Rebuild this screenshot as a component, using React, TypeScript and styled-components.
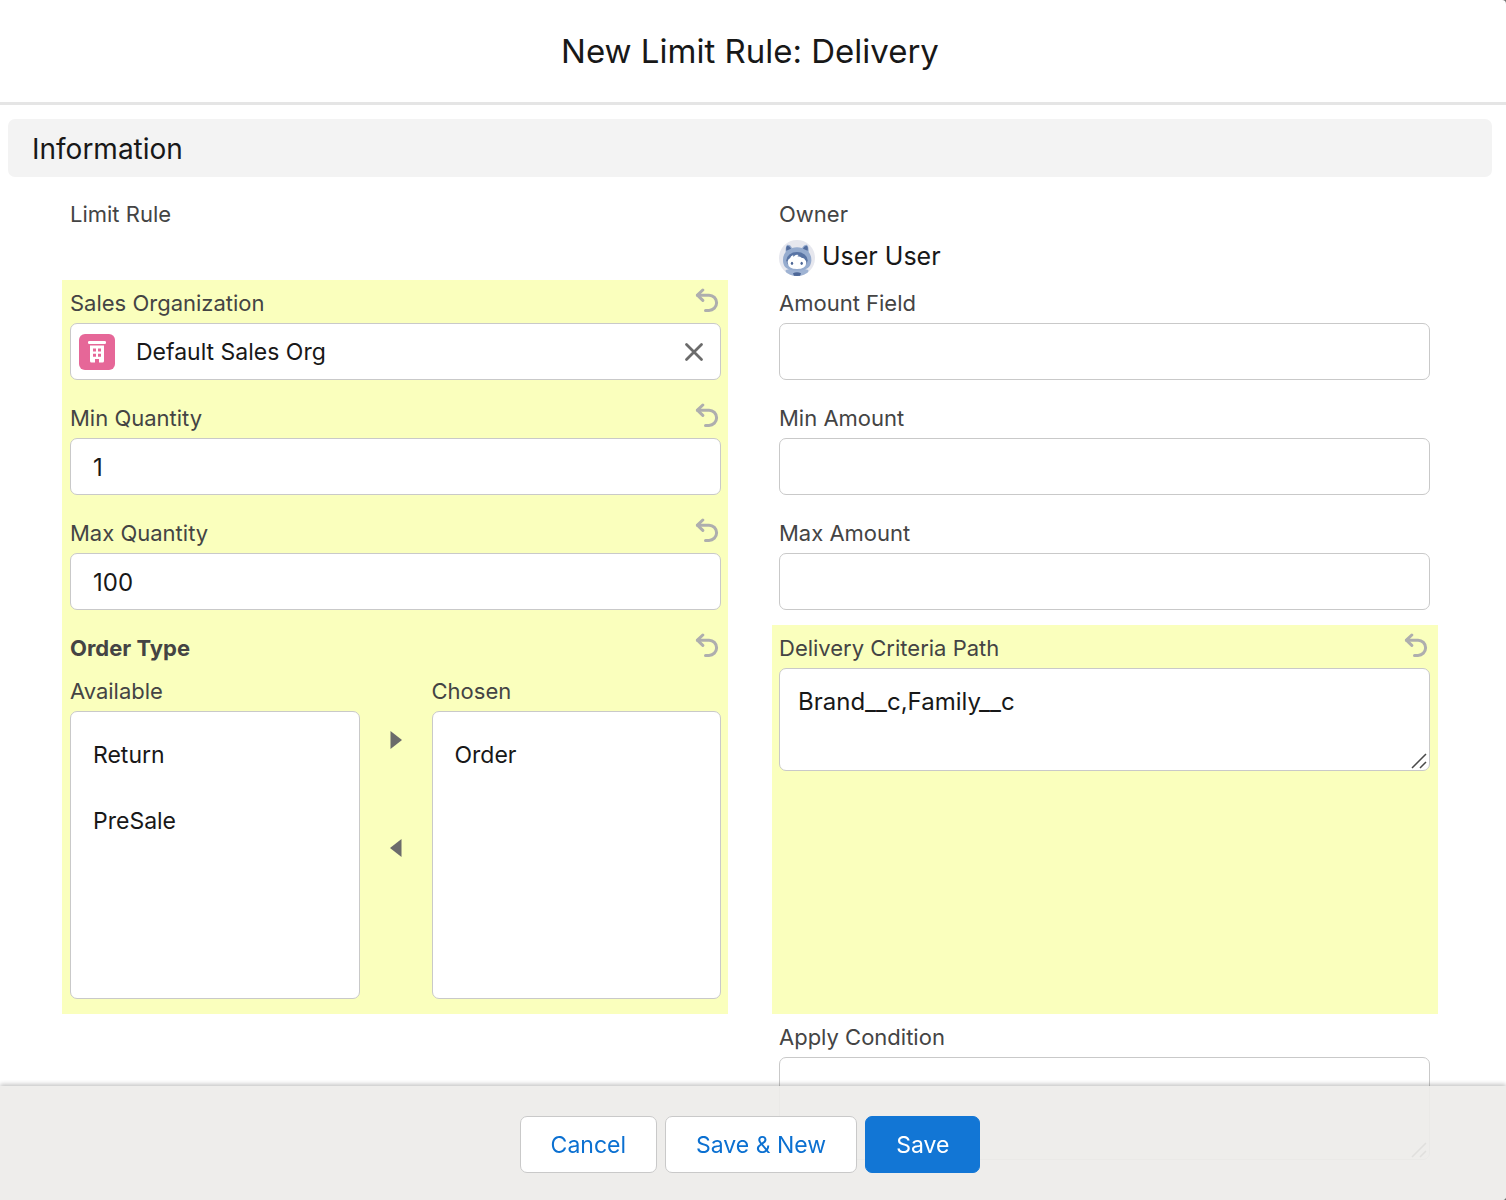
import React, { useState } from "react";
import styled, { createGlobalStyle, css } from "styled-components";

const colors = {
  text: "#181818",
  label: "#444444",
  line: "#c9c9c9",
  edited: "#faffbd",
  brand: "#1276d5",
  link: "#0b70d1",
  iconMuted: "#aeaeae",
  icon: "#6b6b6b",
};

const GlobalStyle = createGlobalStyle`
  *, *::before, *::after { box-sizing: border-box; }
  body {
    margin: 0;
    background: #6f6f6f;
    color: ${colors.text};
    font-family: Inter, "Liberation Sans", sans-serif;
  }
  button, input, select, textarea { font-family: inherit; }
`;

const Dialog = styled.div`
  min-height: 100vh;
  background: #ffffff;
  border-radius: 0 4px 4px 0;
`;

const Header = styled.header`
  display: flex;
  align-items: center;
  justify-content: center;
  height: 105px;
  padding-right: 6px;
  border-bottom: 3px solid #e5e5e5;
`;

const Title = styled.h1`
  margin: 0;
  font-size: 33px;
  font-weight: 400;
  line-height: 44px;
`;

const Main = styled.main`
  padding: 14px 14px 0 8px;
`;

const SectionTitle = styled.h2`
  margin: 0;
  padding: 2px 24px 0;
  border-radius: 7px;
  background: #f3f3f3;
  font-size: 28px;
  font-weight: 400;
  line-height: 56px;
`;

const Columns = styled.form`
  display: grid;
  grid-template-columns: 1fr 1fr;
  column-gap: 44px;
  padding: 14px 54px 0;
`;

const Cell = styled.div<{ $edited?: boolean; $size?: "first" | "normal" }>`
  min-width: 0;
  min-height: ${(p) => (p.$size === "first" ? 89 : 115)}px;
  padding: 8px 7px ${(p) => (p.$size === "first" ? 4 : 15)}px 8px;
  background: ${(p) => (p.$edited ? colors.edited : "transparent")};

  &:nth-child(even) {
    padding-right: 8px;
    padding-left: 7px;
  }
`;

const LabelRow = styled.div`
  display: flex;
  align-items: flex-start;
  justify-content: space-between;
  height: 30px;
  margin-bottom: 5px;
`;

const labelText = css`
  display: block;
  color: ${colors.label};
  font-size: 22px;
  line-height: 30px;
`;

const Label = styled.label`
  ${labelText}
`;

const LabelText = styled.span<{ $strong?: boolean }>`
  ${labelText}
  font-weight: ${(p) => (p.$strong ? 700 : 400)};
`;

const IconButton = styled.button`
  display: flex;
  flex: none;
  padding: 0;
  border: 0;
  background: none;
  cursor: pointer;
`;

const box = css`
  display: block;
  width: 100%;
  border: 1px solid ${colors.line};
  border-radius: 7px;
  background: #ffffff;
  color: ${colors.text};
  font-size: 24px;
`;

const TextInput = styled.input`
  ${box}
  height: 57px;
  padding: 2px 22px 0;
`;

const AreaWrap = styled.div`
  position: relative;
`;

const TextArea = styled.textarea`
  ${box}
  height: 103px;
  padding: 16px 18px;
  line-height: 34px;
  resize: none;
`;

const Grip = styled.svg`
  position: absolute;
  right: 3px;
  bottom: 2px;
`;

const Lookup = styled.div`
  ${box}
  display: flex;
  align-items: center;
  gap: 21px;
  height: 57px;
  padding: 0 16px 0 8px;
`;

const LookupInput = styled.input`
  flex: 1;
  min-width: 0;
  padding: 0;
  border: 0;
  background: transparent;
  color: ${colors.text};
  font-size: 23px;
`;

const Owner = styled.div`
  display: flex;
  align-items: flex-start;
  gap: 7px;
  margin-top: 11px;
  font-size: 25px;
  line-height: 33px;
`;

const Transfer = styled.div`
  display: grid;
  grid-template-columns: 1fr 72px 1fr;
  padding-top: 8px;
`;

const TransferList = styled.div`
  display: flex;
  flex-direction: column;
  gap: 5px;
`;

const ListBox = styled.select`
  ${box}
  appearance: none;
  height: 288px;
  padding: 10px 0;
  overflow: auto;
  outline: none;
  font-size: 23px;
`;

const Choice = styled.option`
  min-height: 66px;
  padding: 19px 22px;
`;

const Arrows = styled.div`
  display: flex;
  flex-direction: column;
  align-items: center;
  gap: 84px;
  padding-top: 52px;
`;

const Footer = styled.footer`
  position: fixed;
  right: 0;
  bottom: 0;
  left: 0;
  display: flex;
  justify-content: center;
  gap: 8px;
  padding: 30px 6px 27px 0;
  border-radius: 0 0 4px 0;
  background: rgba(237, 235, 233, 0.92);
  box-shadow: 0 -2px 4px rgba(0, 0, 0, 0.22);
`;

const Action = styled.button<{ $primary?: boolean }>`
  height: 57px;
  padding: 0 30px;
  border: 1px solid ${(p) => (p.$primary ? colors.brand : colors.line)};
  border-radius: 7px;
  background: ${(p) => (p.$primary ? colors.brand : "#ffffff")};
  color: ${(p) => (p.$primary ? "#ffffff" : colors.link)};
  font-size: 23px;
  cursor: pointer;
`;

const UndoIcon = () => (
  <svg width="26" height="24" viewBox="0 0 26 24" fill="none" stroke={colors.iconMuted} strokeWidth="3" strokeLinecap="round" strokeLinejoin="round" aria-hidden="true">
    <path d="M7.800 2 2.400 7.200 7.800 12.400" />
    <path d="M2.500 7.200H14a7.600 7.600 0 0 1 0 15.200H10.500" />
  </svg>
);

const ClearIcon = () => (
  <svg width="20" height="20" viewBox="0 0 20 20" fill="none" stroke={colors.icon} strokeWidth="2.8" strokeLinecap="round" aria-hidden="true">
    <path d="M2.500 2.500 17.500 17.500M17.500 2.500 2.500 17.500" />
  </svg>
);

const OrgIcon = () => (
  <svg width="36" height="36" viewBox="0 0 36 36" aria-hidden="true">
    <rect width="36" height="36" rx="6" fill="#e66798" />
    <rect x="9" y="7" width="18" height="3" rx="1.2" fill="#fff" />
    <path fillRule="evenodd" fill="#fff" d="M11 11.5h14V27a1.5 1.5 0 0 1-1.5 1.5H20V25h-4v3.500h-3.500A1.500 1.500 0 0 1 11 27zM14 14.500v3h3v-3zM19 14.500v3h3v-3zM14 19.800v3h3v-3zM19 19.800v3h3v-3z" />
  </svg>
);

const Avatar = () => (
  <svg width="36" height="36" viewBox="0 0 108 108" aria-hidden="true">
    <defs>
      <clipPath id="avatar-disc">
        <circle cx="54" cy="54" r="54" />
      </clipPath>
    </defs>
    <g clipPath="url(#avatar-disc)">
      <rect width="108" height="108" fill="#e6e7ee" />
      <path d="M20 108V90q34-12 68 0v18z" fill="#9fb3d3" />
      <path d="M20 36Q19 18 25 14q10-1 14 10 15-5 30 0Q75 13 84 14q6 6 5 22 9 11 8 27-2 29-43 29T12 63q-1-16 8-27z" fill="#95abce" />
      <path d="M22 32q-2-14 4-15 8 1 10 9zM86 32q2-14-4-15-8 1-10 9z" fill="#526c9d" />
      <ellipse cx="54" cy="61" rx="32" ry="25" fill="#5974a4" />
      <path d="M26 64q2-7 7-9 2-8 10-10-2 4 1 5 4-7 15-5l-4 4q10 0 14 5 7-1 9 5 4 3 4 10-2 18-28 18T26 68z" fill="#fff" />
      <ellipse cx="39" cy="70" rx="3.500" ry="5" fill="#4d6797" />
      <ellipse cx="68" cy="70" rx="3.500" ry="5" fill="#4d6797" />
      <path d="M42 100q12-6 24 0l-3 8H45z" fill="#4d6797" />
    </g>
  </svg>
);

const Arrow = ({ left }: { left?: boolean }) => (
  <svg width="14" height="24" viewBox="0 0 14 24" aria-hidden="true">
    <path d={left ? "M12.500 3v18L1 12z" : "M1.500 3v18L13 12z"} fill={colors.icon} />
  </svg>
);

const GripIcon = () => (
  <Grip width="16" height="16" viewBox="0 0 16 16" stroke="#4a4a4a" strokeWidth="1.5" aria-hidden="true">
    <path d="M1 15 15 1M9 15l6-6" />
  </Grip>
);

const Undo = ({ name }: { name: string }) => (
  <IconButton type="button" aria-label={`Undo ${name}`}>
    <UndoIcon />
  </IconButton>
);

type FieldProps = { id: string; label: string; initial?: string; edited?: boolean; area?: boolean };

const Field = ({ id, label, initial = "", edited, area }: FieldProps) => {
  const [value, setValue] = useState(initial);
  return (
    <Cell $edited={edited}>
      <LabelRow>
        <Label htmlFor={id}>{label}</Label>
        {edited && <Undo name={label} />}
      </LabelRow>
      {area ? (
        <AreaWrap>
          <TextArea id={id} value={value} spellCheck={false} onChange={(e) => setValue(e.target.value)} />
          <GripIcon />
        </AreaWrap>
      ) : (
        <TextInput id={id} value={value} onChange={(e) => setValue(e.target.value)} />
      )}
    </Cell>
  );
};

const SalesOrganization = () => {
  const [value, setValue] = useState("Default Sales Org");
  return (
    <Cell $edited>
      <LabelRow>
        <Label htmlFor="sales-org">Sales Organization</Label>
        <Undo name="Sales Organization" />
      </LabelRow>
      <Lookup>
        <OrgIcon />
        <LookupInput id="sales-org" value={value} onChange={(e) => setValue(e.target.value)} />
        <IconButton type="button" aria-label="Clear selection" onClick={() => setValue("")}>
          <ClearIcon />
        </IconButton>
      </Lookup>
    </Cell>
  );
};

const OptionList = ({ id, label, options }: { id: string; label: string; options: string[] }) => (
  <TransferList>
    <Label htmlFor={id}>{label}</Label>
    <ListBox id={id} multiple>
      {options.map((o) => (
        <Choice key={o}>{o}</Choice>
      ))}
    </ListBox>
  </TransferList>
);

const OrderType = () => (
  <Cell $edited role="group" aria-labelledby="order-type">
    <LabelRow>
      <LabelText id="order-type" $strong>
        Order Type
      </LabelText>
      <Undo name="Order Type" />
    </LabelRow>
    <Transfer>
      <OptionList id="available" label="Available" options={["Return", "PreSale"]} />
      <Arrows>
        <IconButton type="button" aria-label="Move to Chosen">
          <Arrow />
        </IconButton>
        <IconButton type="button" aria-label="Move to Available">
          <Arrow left />
        </IconButton>
      </Arrows>
      <OptionList id="chosen" label="Chosen" options={["Order"]} />
    </Transfer>
  </Cell>
);

export default function App() {
  return (
    <>
      <GlobalStyle />
      <Dialog role="dialog" aria-labelledby="dialog-title">
        <Header>
          <Title id="dialog-title">New Limit Rule: Delivery</Title>
        </Header>
        <Main>
          <SectionTitle>Information</SectionTitle>
          <Columns id="rule-form" onSubmit={(e) => e.preventDefault()}>
            <Cell $size="first">
              <LabelText>Limit Rule</LabelText>
            </Cell>
            <Cell $size="first">
              <LabelText>Owner</LabelText>
              <Owner>
                <Avatar />
                <span>User User</span>
              </Owner>
            </Cell>
            <SalesOrganization />
            <Field id="amount-field" label="Amount Field" />
            <Field id="min-quantity" label="Min Quantity" initial="1" edited />
            <Field id="min-amount" label="Min Amount" />
            <Field id="max-quantity" label="Max Quantity" initial="100" edited />
            <Field id="max-amount" label="Max Amount" />
            <OrderType />
            <Field id="criteria-path" label="Delivery Criteria Path" initial="Brand__c,Family__c" edited area />
            <Cell />
            <Field id="apply-condition" label="Apply Condition" area />
          </Columns>
        </Main>
        <Footer>
          <Action type="button">Cancel</Action>
          <Action type="button">Save &amp; New</Action>
          <Action type="submit" form="rule-form" $primary>
            Save
          </Action>
        </Footer>
      </Dialog>
    </>
  );
}
